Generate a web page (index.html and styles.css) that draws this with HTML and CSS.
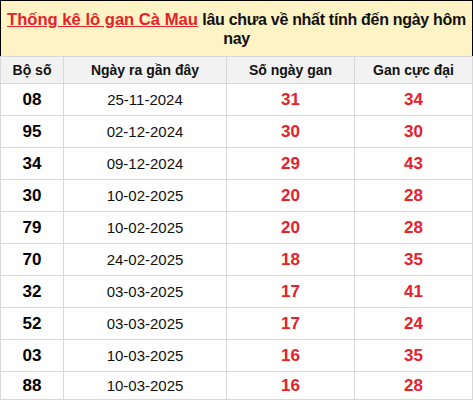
FILE: index.html
```html
<!DOCTYPE html>
<html lang="vi">
<head>
<meta charset="utf-8">
<link rel="stylesheet" href="styles.css">
</head>
<body>
<table class="gan">
  <colgroup><col class="c1"><col class="c2"><col class="c3"><col class="c4"></colgroup>
  <tr><th colspan="4" class="title"><a href="#">Thống kê lô gan Cà Mau</a> <span class="rest">lâu chưa về nhất tính đến ngày hôm nay</span></th></tr>
  <tr class="head"><th>Bộ số</th><th>Ngày ra gần đây</th><th>Số ngày gan</th><th>Gan cực đại</th></tr>
  <tr><td class="num">08</td><td class="date">25-11-2024</td><td class="red">31</td><td class="red">34</td></tr>
  <tr><td class="num">95</td><td class="date">02-12-2024</td><td class="red">30</td><td class="red">30</td></tr>
  <tr><td class="num">34</td><td class="date">09-12-2024</td><td class="red">29</td><td class="red">43</td></tr>
  <tr><td class="num">30</td><td class="date">10-02-2025</td><td class="red">20</td><td class="red">28</td></tr>
  <tr><td class="num">79</td><td class="date">10-02-2025</td><td class="red">20</td><td class="red">28</td></tr>
  <tr><td class="num">70</td><td class="date">24-02-2025</td><td class="red">18</td><td class="red">35</td></tr>
  <tr><td class="num">32</td><td class="date">03-03-2025</td><td class="red">17</td><td class="red">41</td></tr>
  <tr><td class="num">52</td><td class="date">03-03-2025</td><td class="red">17</td><td class="red">24</td></tr>
  <tr><td class="num">03</td><td class="date">10-03-2025</td><td class="red">16</td><td class="red">35</td></tr>
  <tr class="last"><td class="num">88</td><td class="date">10-03-2025</td><td class="red">16</td><td class="red">28</td></tr>
</table>
</body>
</html>
```
FILE: styles.css
```css
html, body {
  margin: 0;
  padding: 0;
  background: #fff;
}
.gan {
  width: 472px;
  border-collapse: collapse;
  border: 1px solid #000;
  font-family: "Liberation Sans", Arial, sans-serif;
  color: #111;
  table-layout: fixed;
}
.c1 { width: 63px; }
.c2 { width: 163px; }
.c3 { width: 128px; }
.c4 { width: 118px; }
.gan th, .gan td {
  border: 1px solid #d8d8d8;
  text-align: center;
  padding: 0;
}
.gan .title {
  background: #fdf3c5;
  font-size: 16px;
  font-weight: bold;
  line-height: 19px;
  height: 55px;
  padding: 0;
  border: 1px solid #000;
  border-bottom-color: #d8d8d8;
}
.gan .title a {
  color: #e8202a;
  font-size: 16.6px;
  text-decoration: underline;
}
.gan .title .rest {
  letter-spacing: -0.3px;
}
.head th {
  background: #f2f2f2;
  font-size: 14px;
  font-weight: bold;
  height: 26px;
}
.gan td {
  height: 31px;
}
.gan .last td {
  height: 27px;
}
.num {
  font-size: 17px;
  font-weight: bold;
  color: #000;
}
.date {
  font-size: 15px;
  color: #111;
}
.red {
  font-size: 17px;
  font-weight: bold;
  color: #e8202a;
}
```
